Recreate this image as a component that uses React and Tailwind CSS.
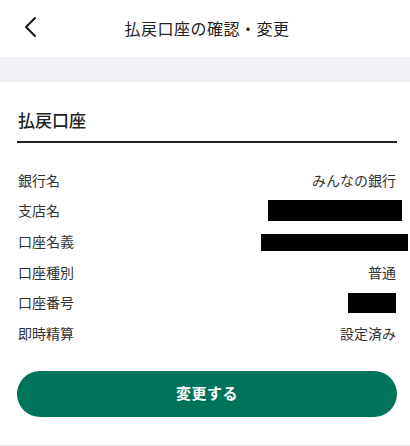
export default function App() {
    const rows = [
        { label: '銀行名', value: 'みんなの銀行' },
        { label: '支店名', mask: 'w-[134px] h-[21px] mr-[-6px]' },
        { label: '口座名義', mask: 'w-[147px] h-[17px] mr-[-12px] mt-[2px]' },
        { label: '口座種別', value: '普通' },
        { label: '口座番号', mask: 'w-[48px] h-[20px]' },
        { label: '即時精算', value: '設定済み' },
    ];

    return (
        <div className="w-[410px] h-[446px] bg-white overflow-hidden flex flex-col font-['Noto_Sans_CJK_JP',sans-serif]">
            <header className="h-[57px] relative flex items-center justify-center">
                <button className="absolute left-[18px] top-[14px] w-[24px] h-[26px] flex items-center justify-center">
                    <svg width="16" height="22" viewBox="0 0 16 22" fill="none">
                        <path d="M13 2 L4 11 L13 20" stroke="#111" strokeWidth="2" strokeLinecap="round" strokeLinejoin="round" />
                    </svg>
                </button>
                <h1 className="text-[16px] text-[#222] tracking-[0.5px] mt-[-1px] ml-[4px]">払戻口座の確認・変更</h1>
            </header>
            <div className="h-[25px] bg-[#f0f0f5]" />
            <section className="pl-[17px] pr-[13px]">
                <h2 className="mt-[25px] h-[34px] pl-[1px] text-[17px] font-medium text-[#222] leading-[26px]">払戻口座</h2>
                <div className="h-[2px] bg-[#222]" />
                <dl className="mt-[22px] mr-[1px] flex flex-col">
                    {rows.map((r) => (
                        <div key={r.label} className="h-[30.6px] flex items-center justify-between pl-[1px]">
                            <dt className="text-[14px] text-[#333]">{r.label}</dt>
                            <dd className="text-[14px] text-[#333] flex items-center">
                                {r.mask ? <span className={`block bg-black ${r.mask}`} /> : r.value}
                            </dd>
                        </div>
                    ))}
                </dl>
                <button className="mt-[22px] w-full h-[46px] rounded-full bg-[#00745a] text-white text-[15px] font-bold tracking-[0.5px]">
                    変更する
                </button>
            </section>
            <div className="mt-auto h-[1px] bg-[#ececec]" />
        </div>
    );
}
